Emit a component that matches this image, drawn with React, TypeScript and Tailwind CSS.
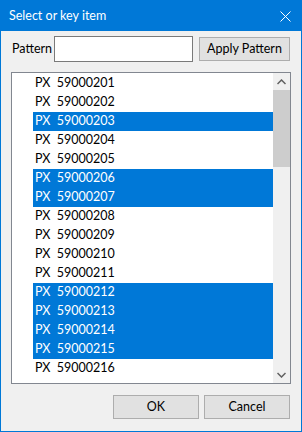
import React from "react";

const items = Array.from({ length: 16 }, (_, i) => 59000201 + i);
const selected = [59000203, 59000206, 59000207, 59000212, 59000213, 59000214, 59000215];

const Chevron = ({ up }: { up?: boolean }) => (
  <svg width="9" height="6" viewBox="0 0 9 6" className={up ? "" : "rotate-180"}>
    <path d="M0.5 5 L4.5 1 L8.5 5" stroke="#606060" strokeWidth="1.5" fill="none" />
  </svg>
);

const App: React.FC = () => {
  return (
    <div
      className="w-[302px] h-[432px] border border-[#0078d7] bg-[#f0f0f0] flex flex-col text-[12.5px] text-black"
      style={{ fontFamily: 'Lato, "Noto Sans", sans-serif' }}
    >
      <div className="h-[30px] bg-[#0078d7] flex items-center justify-between pl-[8px] pr-[10px] text-white">
        <span className="leading-none">Select or key item</span>
        <svg width="11" height="11" viewBox="0 0 11 11">
          <path d="M0.5 0.5 L10.5 10.5 M10.5 0.5 L0.5 10.5" stroke="#fff" strokeWidth="1" />
        </svg>
      </div>

      <div className="flex items-center mt-[5px] pl-[11px]">
        <span className="w-[42px]">Pattern</span>
        <input className="w-[139px] h-[26px] border border-[#7a7a7a] bg-white outline-none px-1" />
        <button className="ml-[6px] w-[91px] h-[24px] border border-[#adadad] bg-[#e1e1e1] leading-none">
          Apply Pattern
        </button>
      </div>

      <div className="mt-[10px] mx-[10px] h-[312px] border border-[#828790] bg-white flex">
        <div className="flex-1 pt-[1px] pl-[21px]">
          {items.map((n) => {
            const sel = selected.includes(n);
            return (
              <div
                key={n}
                className={`h-[19px] flex items-center pl-[2px] whitespace-pre ${
                  sel ? "bg-[#0078d7] text-white" : "text-black"
                }`}
              >
                {"PX  " + n}
              </div>
            );
          })}
        </div>
        <div className="w-[17px] bg-[#f0f0f0] flex flex-col">
          <div className="h-[17px] flex items-center justify-center">
            <Chevron up />
          </div>
          <div className="h-[77px] bg-[#cdcdcd]" />
          <div className="flex-1" />
          <div className="h-[17px] flex items-center justify-center">
            <Chevron />
          </div>
        </div>
      </div>

      <div className="flex justify-end gap-[5px] mt-[11px] pr-[11px]">
        <button className="w-[86px] h-[24px] border border-[#adadad] bg-[#e1e1e1]">OK</button>
        <button className="w-[86px] h-[24px] border border-[#adadad] bg-[#e1e1e1]">Cancel</button>
      </div>
    </div>
  );
};

export default App;
